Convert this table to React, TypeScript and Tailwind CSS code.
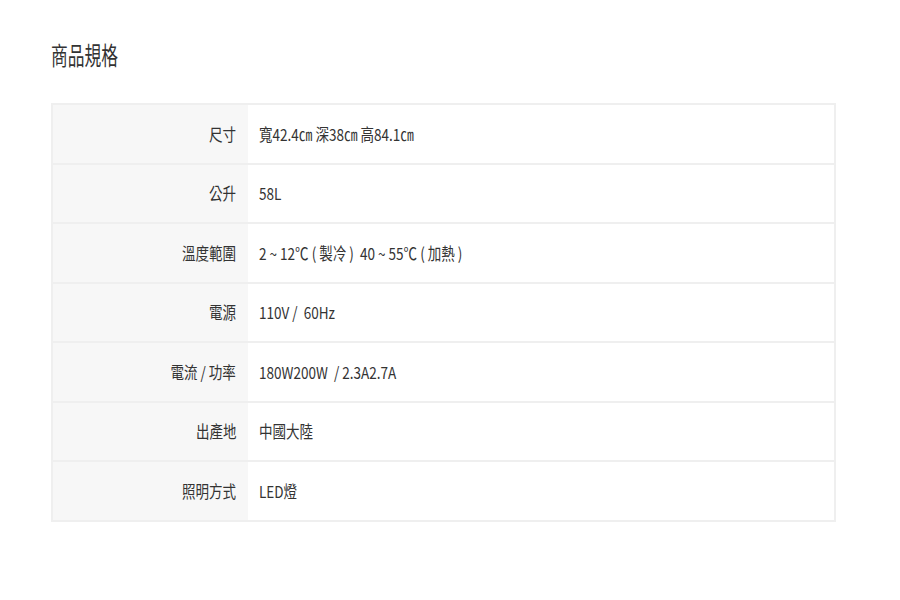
import React from "react";

const rows: [string, string][] = [
  ["尺寸", "寬42.4㎝ 深38㎝ 高84.1㎝"],
  ["公升", "58L"],
  ["溫度範圍", "2 ~ 12℃ ( 製冷 )  40 ~ 55℃ ( 加熱 )"],
  ["電源", "110V /  60Hz"],
  ["電流 / 功率", "180W200W  / 2.3A2.7A"],
  ["出產地", "中國大陸"],
  ["照明方式", "LED燈"],
];

export default function App() {
  return (
    <div
      className="w-[900px] h-[600px] bg-white text-[#333]"
      style={{ fontFamily: '"Noto Sans CJK TC", "Noto Sans", sans-serif' }}
    >
      <div className="pl-[51px] pt-[38px]">
        <div className="h-[32px] flex items-center">
          <span className="inline-block origin-left scale-x-[0.67] text-[25px] leading-none whitespace-nowrap">
            商品規格
          </span>
        </div>
        <div className="mt-[33px] w-[785px] border-x-2 border-t-2 border-[#efefef]">
          {rows.map(([k, v]) => (
            <div key={k} className="flex h-[59.5px] border-b-2 border-[#efefef]">
              <div className="w-[195px] bg-[#f7f7f7] flex items-center justify-end pr-[12px]">
                <span className="inline-block origin-right scale-x-[0.82] text-[16.5px] leading-none whitespace-pre">
                  {k}
                </span>
              </div>
              <div className="flex-1 flex items-center pl-[11px]">
                <span className="inline-block origin-left scale-x-[0.82] text-[16.5px] leading-none whitespace-pre">
                  {v}
                </span>
              </div>
            </div>
          ))}
        </div>
      </div>
    </div>
  );
}
